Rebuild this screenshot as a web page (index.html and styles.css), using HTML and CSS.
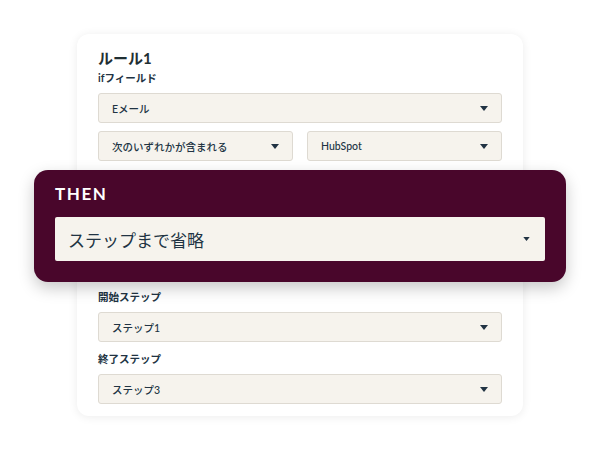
FILE: index.html
```html
<!DOCTYPE html>
<html lang="ja">
<head>
<meta charset="utf-8">
<link rel="stylesheet" href="styles.css">
</head>
<body>
<div class="card">
  <h2 class="title">ルール1</h2>
  <div class="label">ifフィールド</div>
  <div class="select"><span>Eメール</span><svg class="arrow" viewBox="0 0 8 5"><polygon points="0,0 8,0 4,5"/></svg></div>
  <div class="row">
    <div class="select"><span>次のいずれかが含まれる</span><svg class="arrow" viewBox="0 0 8 5"><polygon points="0,0 8,0 4,5"/></svg></div>
    <div class="select"><span>HubSpot</span><svg class="arrow" viewBox="0 0 8 5"><polygon points="0,0 8,0 4,5"/></svg></div>
  </div>
  <div class="then">
    <div class="then-title">THEN</div>
    <div class="select big"><span>ステップまで省略</span><svg class="arrow small" viewBox="0 0 8 5"><polygon points="0,0 8,0 4,5"/></svg></div>
  </div>
  <div class="label">開始ステップ</div>
  <div class="select"><span>ステップ1</span><svg class="arrow" viewBox="0 0 8 5"><polygon points="0,0 8,0 4,5"/></svg></div>
  <div class="label second">終了ステップ</div>
  <div class="select"><span>ステップ3</span><svg class="arrow" viewBox="0 0 8 5"><polygon points="0,0 8,0 4,5"/></svg></div>
</div>
</body>
</html>
```
FILE: styles.css
```css
* { box-sizing: border-box; }
html, body { margin: 0; padding: 0; background: #ffffff; }
body {
  font-family: "Lato", "Noto Sans CJK JP", sans-serif;
  color: #213343;
  width: 600px;
  height: 450px;
  overflow: hidden;
  padding-top: 34px;
}
.card {
  margin-left: 77px;
  width: 446px;
  height: 382px;
  background: #fff;
  border-radius: 12px;
  box-shadow: 0 1px 10px rgba(0,0,0,0.08);
  padding: 14px 21px 12px;
}
.title {
  margin: 0;
  font-size: 15px;
  line-height: 20px;
  font-weight: 700;
  color: #1f2f33;
}
.label {
  margin-top: 2px;
  margin-bottom: 7px;
  font-size: 10.5px;
  line-height: 16px;
  font-weight: 700;
}
.label.second { margin-top: 9px; }
.select {
  height: 30px;
  background: #f6f3ed;
  border: 1px solid #dedad2;
  border-radius: 3px;
  display: flex;
  align-items: center;
  justify-content: space-between;
  padding: 0 13px 0 13px;
  font-size: 10.5px;
  font-weight: 500;
}
.arrow { width: 8px; height: 5px; fill: #213343; }
.arrow.small { width: 7px; height: 4px; }
.row {
  display: grid;
  grid-template-columns: 1fr 1fr;
  gap: 14px;
  margin-top: 8px;
}
.then {
  margin: 9px -64px 7px;
  height: 112px;
  background: #49062b;
  border-radius: 14px;
  box-shadow: 0 6px 16px rgba(0,0,0,0.22);
  padding: 12px 21px 21px;
  position: relative;
}
.then-title {
  color: #fff;
  font-size: 17px;
  line-height: 24px;
  font-weight: 700;
  letter-spacing: 1.6px;
  margin-bottom: 11px;
}
.select.big {
  height: 44px;
  border: none;
  border-radius: 2px;
  font-size: 17px;
  font-weight: 400;
  padding: 0 15px 0 13px;
}
```
